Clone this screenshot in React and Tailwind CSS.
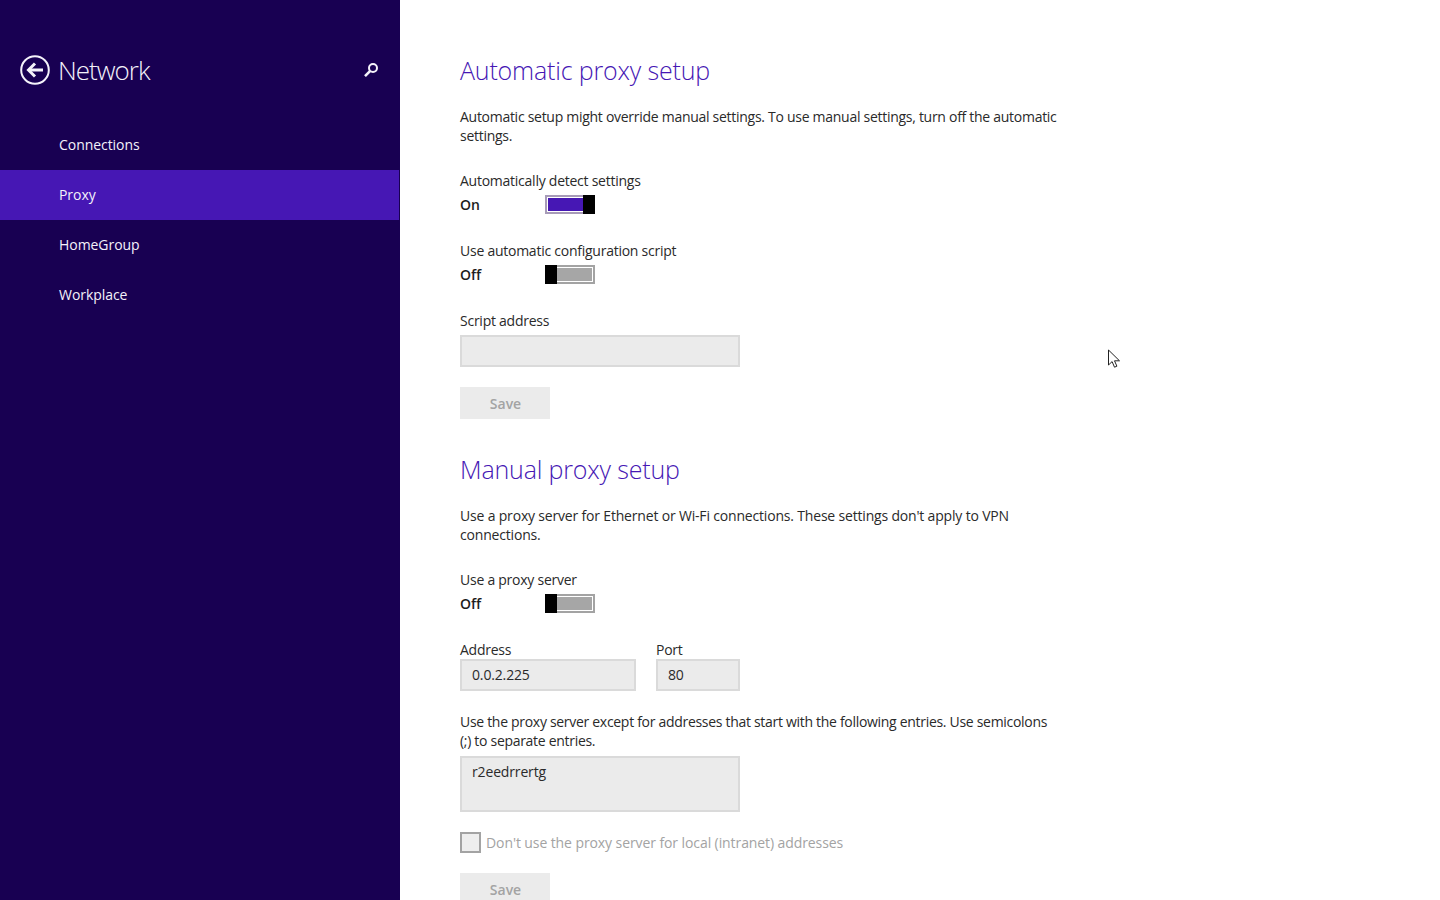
const font = { fontFamily: '"Open Sans", "Noto Sans", sans-serif' };

function NavItem({ label, active }) {
  return (
    <div className={`h-[50px] flex items-center pl-[59px] pb-[2px] text-[14px] tracking-[-0.05px] text-[#f4f2fa] mr-px ${active ? "bg-[#4617b4]" : ""}`}>
      {label}
    </div>
  );
}

function Toggle({ on }) {
  return (
    <div className="flex items-center h-[19px] mt-[5px]">
      <span className="w-[85px] font-semibold text-[14px] leading-[19px] text-[#1c1c1c]">{on ? "On" : "Off"}</span>
      <div className={`flex h-[19px] w-[50px] ${on ? "flex-row" : "flex-row-reverse"}`}>
        <div className={`flex-1 border-2 bg-white ${on ? "border-r-0 border-[#a79bb8] pl-px py-px" : "border-l-0 border-[#a3a3a3] pr-px py-px"}`}>
          <div className={`h-full ${on ? "bg-[#4617b4]" : "bg-[#a6a6a6]"}`} />
        </div>
        <div className="w-[12px] bg-black" />
      </div>
    </div>
  );
}

const Label = ({ children, className = "mt-[26px]" }) => (
  <div className={`text-[14px] leading-[19px] tracking-[-0.25px] text-[#2a2a2a] ${className}`}>{children}</div>
);
const Heading = ({ children, className = "" }) => (
  <h2 className={`text-[25px] leading-[38px] tracking-[-0.17px] font-light text-[#4617b4] ${className}`}>{children}</h2>
);
const Para = ({ children, className = "" }) => (
  <p className={`text-[14px] leading-[19px] text-[#2a2a2a] ${className}`}>{children}</p>
);
const Field = ({ value, className = "" }) => (
  <div className={`bg-[#ebebeb] border-2 border-[#dadada] pl-[10px] text-[14px] tracking-[-0.15px] text-[#2a2a2a] ${className}`}>{value}</div>
);
const Save = ({ className = "mt-[20px]" }) => (
  <div className={`w-[90px] h-[32px] shrink-0 bg-[#ebebeb] flex items-center justify-center pl-px text-[14px] font-semibold text-[#a3a3a3] ${className}`}>Save</div>
);

export default function App() {
  return (
    <div className="flex h-[900px] w-[1440px] overflow-hidden bg-white relative" style={font}>
      <aside className="w-[400px] shrink-0 bg-[#180052] flex flex-col">
        <div className="h-[120px] flex items-start pt-[55px] pl-[20px] pr-[21px]">
          <svg width="30" height="30" viewBox="0 0 30 30" fill="none" className="shrink-0">
            <circle cx="15" cy="15" r="13.8" stroke="#f4f2fa" strokeWidth="2" />
            <path d="M23 15H9.5" stroke="#f4f2fa" strokeWidth="3" />
            <path d="M15 8.5L8.5 15l6.5 6.5" stroke="#f4f2fa" strokeWidth="3" />
          </svg>
          <span className="ml-[8px] text-[26px] leading-[30px] tracking-[-1px] font-light text-[#f4f2fa]">Network</span>
          <svg width="16" height="16" viewBox="0 0 16 16" fill="none" className="ml-auto mt-[7px]">
            <circle cx="10" cy="6" r="4" stroke="#f4f2fa" strokeWidth="2" />
            <path d="M7 9.2L2 14.2" stroke="#f4f2fa" strokeWidth="2.6" />
          </svg>
        </div>
        <NavItem label="Connections" />
        <NavItem label="Proxy" active />
        <NavItem label="HomeGroup" />
        <NavItem label="Workplace" />
      </aside>

      <main className="flex-1 pl-[60px] pt-[51px] flex flex-col">
        <Heading>Automatic proxy setup</Heading>
        <Para className="mt-[18px] w-[610px] tracking-[-0.28px]">Automatic setup might override manual settings. To use manual settings, turn off the automatic settings.</Para>
        <Label>Automatically detect settings</Label>
        <Toggle on />
        <Label className="mt-[27px]">Use automatic configuration script</Label>
        <Toggle />
        <Label className="mt-[27px]">Script address</Label>
        <Field className="w-[280px] h-[32px] mt-[5px] shrink-0" />
        <Save />
        <Heading className="mt-[31px]">Manual proxy setup</Heading>
        <Para className="mt-[18px] w-[610px] tracking-[-0.18px]">Use a proxy server for Ethernet or Wi-Fi connections. These settings don't apply to VPN connections.</Para>
        <Label>Use a proxy server</Label>
        <Toggle />
        <div className="flex gap-[20px] mt-[27px]">
          <div className="flex flex-col">
            <Label className="">Address</Label>
            <Field value="0.0.2.225" className="w-[176px] h-[32px] flex items-center pb-[2px]" />
          </div>
          <div className="flex flex-col">
            <Label className="">Port</Label>
            <Field value="80" className="w-[84px] h-[32px] flex items-center pb-[2px]" />
          </div>
        </div>
        <Para className="mt-[21px] w-[596px] tracking-[-0.3px]">Use the proxy server except for addresses that start with the following entries. Use semicolons (;) to separate entries.</Para>
        <Field value="r2eedrrertg" className="w-[280px] h-[56px] mt-[6px] pt-[3px] shrink-0" />
        <div className="flex items-center mt-[20px] h-[21px] shrink-0">
          <div className="w-[21px] h-[21px] border-2 border-[#a3a3a3] bg-[#eeeeee]" />
          <span className="ml-[5px] text-[14px] tracking-[-0.09px] text-[#a3a3a3]">Don't use the proxy server for local (intranet) addresses</span>
        </div>
        <Save />
      </main>

      <svg width="14" height="20" viewBox="0 0 14 20" className="absolute left-[1107px] top-[349px]">
        <path d="M1.5 1v15l3.6-3.4 2.4 5.6 2.4-1-2.4-5.4h5z" fill="#fff" stroke="#222" strokeWidth="1" />
      </svg>
    </div>
  );
}
